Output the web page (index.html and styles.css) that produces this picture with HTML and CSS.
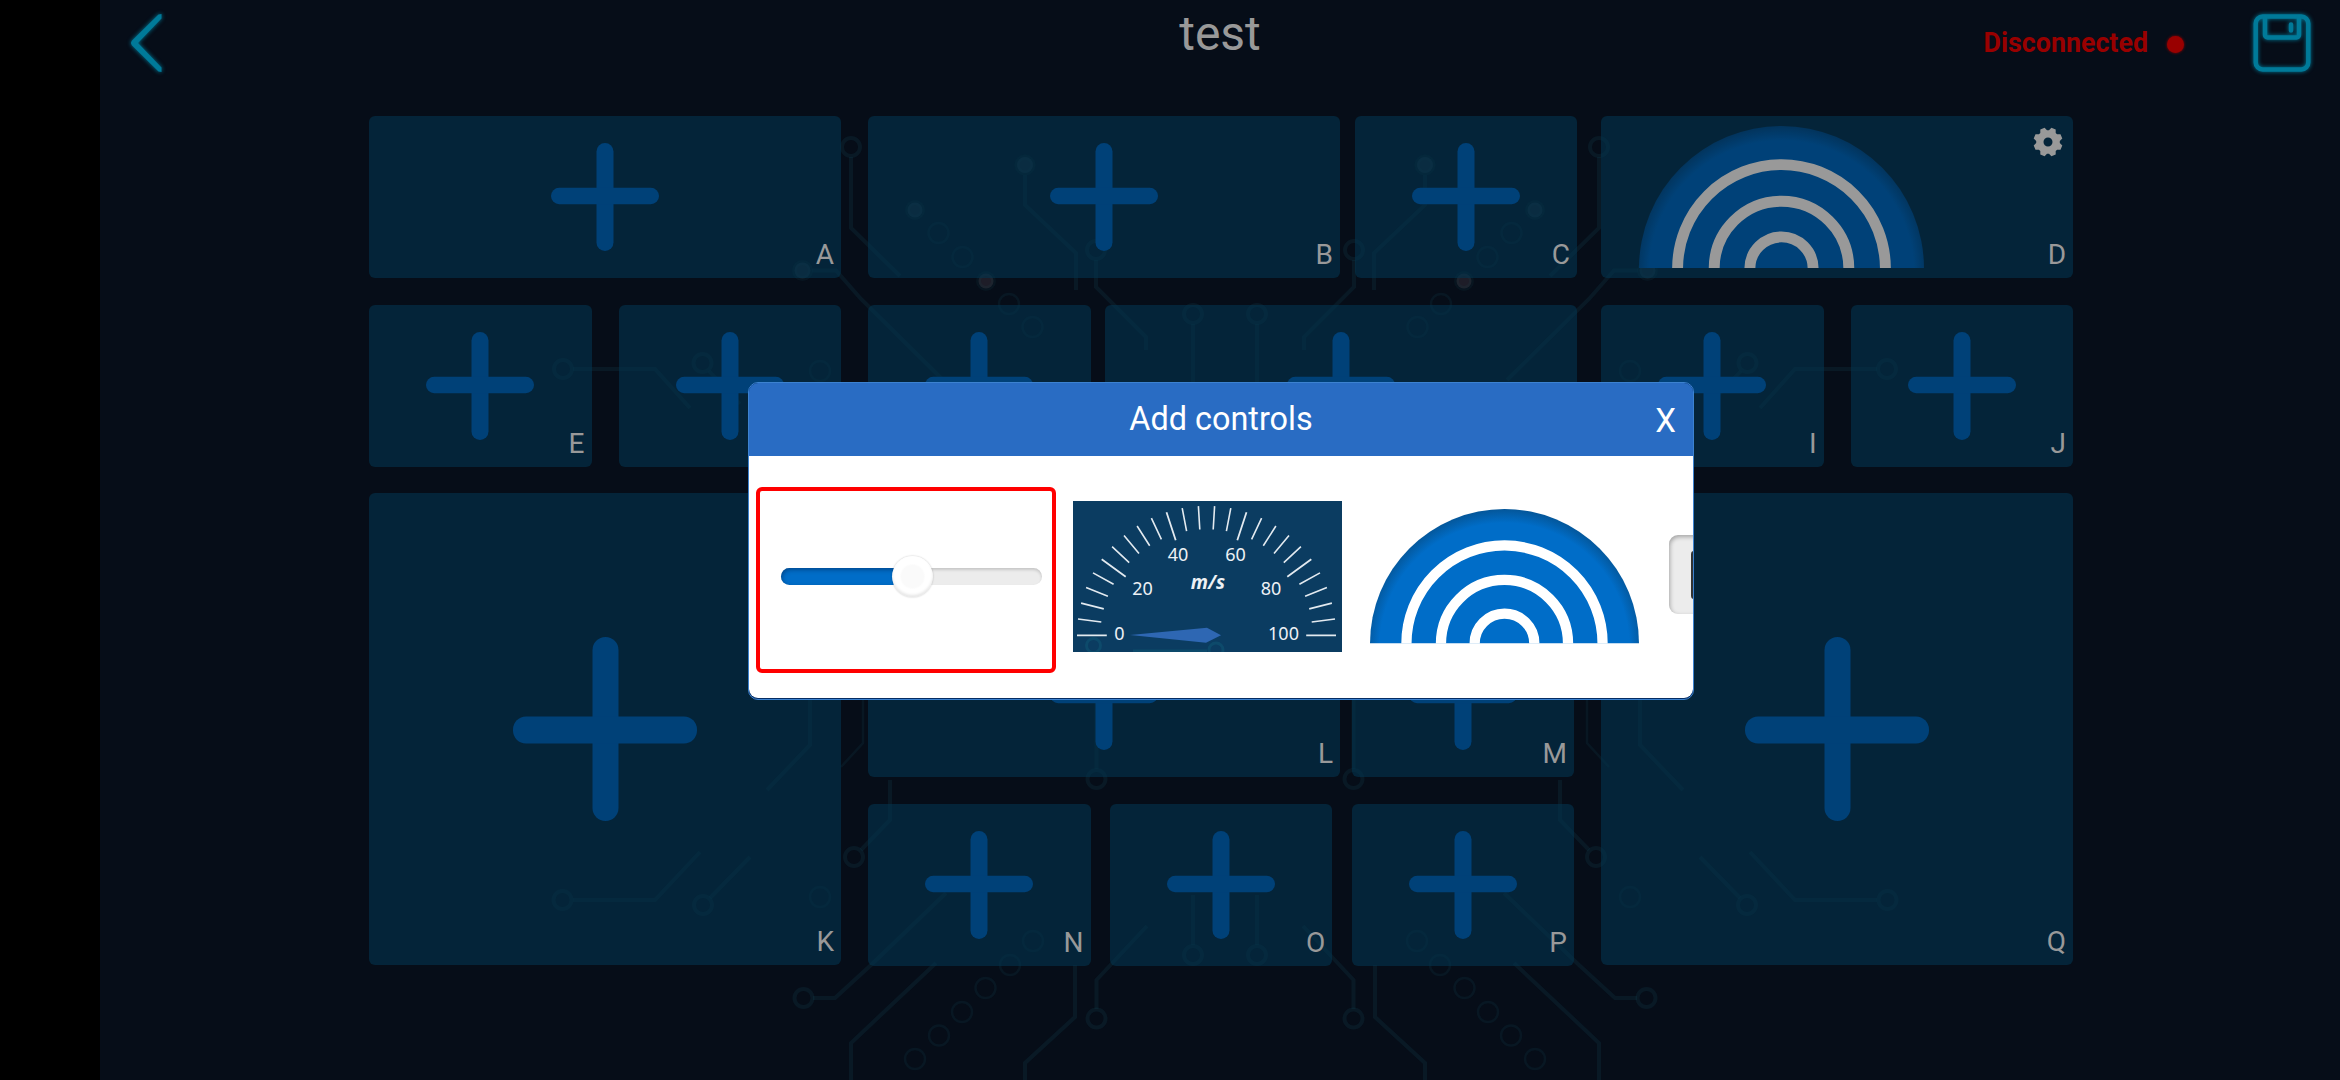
FILE: index.html
```html
<!DOCTYPE html>
<html lang="en">
<head>
<meta charset="utf-8">
<title>test</title>
<link rel="stylesheet" href="styles.css">
</head>
<body>
<svg class="defs" width="0" height="0" aria-hidden="true">
  <defs>
    <symbol id="plus" viewBox="0 0 108 108">
      <rect x="45.5" y="0" width="17" height="108" rx="8.5"/>
      <rect x="0" y="44.8" width="108" height="16.4" rx="8.2"/>
    </symbol>
    <symbol id="plus-big" viewBox="0 0 184 184">
      <rect x="79.5" y="0" width="26" height="184" rx="13"/>
      <rect x="0" y="79.5" width="184" height="27" rx="13"/>
    </symbol>
    <radialGradient id="dome" gradientUnits="userSpaceOnUse" cx="142.5" cy="147" r="147">
      <stop offset="0" stop-color="#006dc8"/>
      <stop offset=".9" stop-color="#006dc8"/>
      <stop offset="1" stop-color="#045699"/>
    </radialGradient>
    <symbol id="radar" viewBox="0 0 285 142.5">
      <path d="M0 142.5a142.5 142.5 0 0 1 285 0z" fill="url(#dome)"/>
      <g fill="none" stroke="#fff" stroke-width="10.9">
        <circle cx="142.5" cy="142.5" r="103.9"/>
        <circle cx="142.5" cy="142.5" r="67.3"/>
        <circle cx="142.5" cy="142.5" r="31.6"/>
      </g>
    </symbol>
    <g id="traces">
      <g class="trace">
        <path d="M851 157V228L900 276M812 270.5H836L861 299L943 380"/>
        <path d="M573 369H655L690 408M709 371L740 404"/>
        <path d="M1025 175V205L1076 253V290M1096 260V287L1146 337V350M1193 324V390"/>
        <path d="M573 900H655L700 852M710 898L750 857M810 700V745L767 790"/>
        <path d="M861 850L890 820V780M813 998H835L871 965L946 893"/>
        <path d="M851 1080V1043L936 963M1096.5 1009V980L1147 926M1075 965V1017L1025 1063V1080"/>
        <path d="M1096.5 769V700M1193 945V895"/>
        <circle cx="851" cy="147" r="9"/><circle cx="563" cy="369" r="9"/><circle cx="702.5" cy="363" r="9"/>
        <circle cx="1096" cy="250" r="9"/><circle cx="1193" cy="314" r="9"/>
        <circle cx="562.5" cy="900" r="9"/><circle cx="703" cy="905" r="9"/><circle cx="854" cy="857" r="9"/>
        <circle cx="803.5" cy="998" r="9"/><circle cx="1096.5" cy="1018.5" r="9"/>
        <circle cx="1096.5" cy="779" r="9"/><circle cx="1193" cy="955" r="9"/>
      </g>
      <g class="trace thin">
        <path d="M863 700V743L841 767"/>
        <circle cx="820" cy="371" r="10"/><circle cx="938.5" cy="233" r="10"/><circle cx="962.5" cy="257" r="10"/>
        <circle cx="1009" cy="304" r="10"/><circle cx="1032.5" cy="327" r="10"/><circle cx="820" cy="897" r="10"/>
        <circle cx="1033" cy="941" r="10"/><circle cx="1010" cy="965" r="10"/><circle cx="985.5" cy="988" r="10"/>
        <circle cx="962" cy="1012" r="10"/><circle cx="939" cy="1035.5" r="10"/><circle cx="915" cy="1059" r="10"/>
      </g>
      <g class="pad">
        <circle cx="802.5" cy="270.5" r="8"/><circle cx="1025" cy="165" r="8"/><circle cx="915" cy="210" r="7.5"/>
        <circle class="warm" cx="986" cy="281" r="7.5"/>
      </g>
    </g>
  </defs>
</svg>

<div class="app">
  <svg class="circuit" viewBox="100 0 2240 1080" aria-hidden="true">
    <use href="#traces"/>
    <use href="#traces" transform="translate(2450 0) scale(-1 1)"/>
  </svg>

  <header class="bar">
    <svg class="back" viewBox="0 0 46 74"><path d="M37.500 8V12.500L14 37 37.500 61.500V66L34.500 65.500 7.800 39.300Q6 37 7.800 34.700L34.500 8.500z"/></svg>
    <h1 class="title">test</h1>
    <div class="status">
      <span class="status-text">Disconnected</span>
      <span class="dot"></span>
      <svg class="save" viewBox="0 0 74 74">
        <rect x="10.7" y="10.5" width="52.6" height="53" rx="7"/>
        <path d="M20 11V29a2.500 2.500 0 0 0 2.500 2.500H51.500a2.500 2.500 0 0 0 2.500-2.500V11M46 18.500V24.500"/>
      </svg>
    </div>
  </header>

  <main class="board">
    <section class="side">
      <div class="row">
        <div class="tile wide"><svg class="plus"><use href="#plus"/></svg><span class="tag">A</span></div>
      </div>
      <div class="row">
        <div class="tile"><svg class="plus"><use href="#plus"/></svg><span class="tag">E</span></div>
        <div class="tile"><svg class="plus"><use href="#plus"/></svg><span class="tag">F</span></div>
      </div>
      <div class="tile huge"><svg class="plus-big"><use href="#plus-big"/></svg><span class="tag">K</span></div>
    </section>

    <section class="middle">
      <div class="row">
        <div class="tile wide"><svg class="plus"><use href="#plus"/></svg><span class="tag">B</span></div>
        <div class="tile"><svg class="plus"><use href="#plus"/></svg><span class="tag">C</span></div>
      </div>
      <div class="row">
        <div class="tile"><svg class="plus"><use href="#plus"/></svg><span class="tag">G</span></div>
        <div class="tile wide"><svg class="plus"><use href="#plus"/></svg><span class="tag">H</span></div>
      </div>
      <div class="row low">
        <div class="tile wide"><svg class="plus"><use href="#plus"/></svg><span class="tag">L</span></div>
        <div class="tile"><svg class="plus"><use href="#plus"/></svg><span class="tag">M</span></div>
      </div>
      <div class="row inset">
        <div class="tile"><svg class="plus"><use href="#plus"/></svg><span class="tag">N</span></div>
        <div class="tile"><svg class="plus"><use href="#plus"/></svg><span class="tag">O</span></div>
        <div class="tile"><svg class="plus"><use href="#plus"/></svg><span class="tag">P</span></div>
      </div>
    </section>

    <section class="side">
      <div class="row">
        <div class="tile wide filled">
          <svg class="radar"><use href="#radar"/></svg>
          <svg class="gear" viewBox="-15 -15 30 30">
            <path fill-rule="evenodd" d="M11.800-1V1L14.300 3.400 12.500 7.700 9.100 7.700 7.700 9.100V12.500L3.400 14.300 1 11.800H-1L-3.400 14.300-7.700 12.500V9.100L-9.100 7.700H-12.500L-14.300 3.400-11.800 1V-1L-14.300-3.400-12.500-7.700H-9.100L-7.700-9.100V-12.500L-3.400-14.300-1-11.800H1L3.400-14.300 7.700-12.500V-9.100L9.100-7.700H12.500L14.300-3.400zM0-4.500a4.500 4.500 0 1 0 0 9a4.500 4.500 0 1 0 0-9z"/>
          </svg>
          <span class="tag">D</span>
        </div>
      </div>
      <div class="row">
        <div class="tile"><svg class="plus"><use href="#plus"/></svg><span class="tag">I</span></div>
        <div class="tile"><svg class="plus"><use href="#plus"/></svg><span class="tag">J</span></div>
      </div>
      <div class="tile huge"><svg class="plus-big"><use href="#plus-big"/></svg><span class="tag">Q</span></div>
    </section>
  </main>
</div>

<div class="dialog" role="dialog" aria-label="Add controls">
  <div class="dialog-head">
    <h2 class="dialog-title">Add controls</h2>
    <span class="close">X</span>
  </div>
  <div class="picker">
    <div class="option selected">
      <div class="slider"><div class="slider-fill"></div><div class="thumb"></div></div>
    </div>
    <svg class="gauge" viewBox="0 0 269 151">
      <rect width="269" height="151" fill="#0b3c61"/>
      <g fill="none" stroke="#0d4a6b" stroke-width="3">
        <circle cx="20.500" cy="144.500" r="7"/><circle cx="143" cy="149" r="7"/><path d="M60 150H134"/>
      </g>
      <g class="ticks">
        <path d="M4 134.300H33.800M28.700 58.300L52.700 75.700M93.500 11.200L102.700 39.200M173.500 11.200L164.300 39.200M238.300 58.300L214.300 75.700M233.200 134.300H263"/>
        <path id="minor-ticks" class="minor" d="M5 118L28.300 121M8.100 102.100L30.800 107.900M13.100 86.600L34.900 95.300M20 71.900L40.600 83.200M39.100 45.700L56.200 61.700M51 34.500L66 52.600M64.100 25L76.700 44.800M78.400 17.100L88.400 38.300M109.200 7.100L113.600 30.200M125.400 5.100L126.800 28.500"/>
        <use href="#minor-ticks" transform="translate(267 0) scale(-1 1)"/>
      </g>
      <path d="M57 134L134 126.700 148 134.300 133 141.700z" fill="#2e67b3"/>
      <g class="gauge-text">
        <text x="46.300" y="138.500">0</text><text x="69.500" y="94">20</text><text x="105" y="60">40</text>
        <text x="162.500" y="60">60</text><text x="198" y="94">80</text><text x="210.500" y="138.500">100</text>
        <text class="unit" x="135" y="87.500">m/s</text>
      </g>
    </svg>
    <svg class="radar-option"><use href="#radar"/></svg>
    <div class="display"><div class="display-screen"></div></div>
  </div>
</div>
</body>
</html>
```
FILE: styles.css
```css
* { box-sizing: border-box; }
body {
  margin: 0;
  width: 2340px;
  height: 1080px;
  overflow: hidden;
  position: relative;
  background: #000;
  font-family: Roboto, "Liberation Sans", sans-serif;
}
svg { display: block; }
.defs { position: absolute; }
.app {
  position: relative;
  height: 1080px;
  margin-left: 100px;
  background: #060d18;
}
.circuit { position: absolute; inset: 0; width: 2240px; height: 1080px; }
.trace { fill: none; stroke: #1a6070; stroke-opacity: .15; stroke-width: 4; }
.thin { stroke-width: 2.500px; stroke-opacity: .12; }
.pad { fill: #5a7484; fill-opacity: .2; stroke: #1a6070; stroke-opacity: .1; stroke-width: 5; }
.warm { fill: #80606a; }

.bar {
  position: relative;
  display: grid;
  grid-template-columns: 1fr auto 1fr;
  height: 116px;
}
.back { width: 46px; height: 74px; margin: 6px 0 0 24px; fill: #007a99; }
.title { margin: 6px 0 0; font-size: 48px; line-height: 56px; font-weight: 400; color: #999; }
.status { display: flex; justify-content: flex-end; align-items: flex-start; }
.status-text { margin-top: 27px; font-size: 26.800px; line-height: 33px; font-weight: 700; color: #900; }
.dot {
  width: 17px; height: 17px; margin: 36px 61px 0 19px;
  border-radius: 50%; background: #990000; box-shadow: 0 0 3px #900;
}
.save { width: 74px; height: 74px; margin: 6px 21px 0 0; fill: none; stroke: #007a99; stroke-width: 4.500px; stroke-linecap: round; }
.back, .save { filter: drop-shadow(0 0 2px #007a99); }

.board { position: relative; display: flex; margin-left: 269px; }
.side { width: 472px; }
.middle { width: 709px; margin: 0 24px 0 27px; }
.row { display: flex; justify-content: space-between; height: 162px; margin-bottom: 26.700px; }
.low { margin-top: 148.700px; }
.low, .inset { width: 706px; }
.tile {
  position: relative;
  display: flex;
  align-items: center;
  justify-content: center;
  width: 222.500px;
  height: 100%;
  border-radius: 6px;
  background: rgba(4, 51, 78, .62);
}
.wide { width: 472px; }
.huge { width: 472px; height: 472px; }
.plus { width: 108px; height: 108px; fill: #004178; }
.plus-big { width: 184px; height: 184px; fill: #004178; }
.tag {
  position: absolute;
  right: 7px;
  bottom: 7px;
  font-size: 28px;
  line-height: 33px;
  color: #999;
}
.filled { justify-content: flex-start; padding-left: 38px; }
.radar { width: 285px; height: 142.500px; filter: brightness(.6); }
.gear { position: absolute; right: 10px; top: 11px; width: 30px; height: 30px; fill: #999; }

.dialog {
  position: absolute;
  left: 748px;
  top: 382px;
  width: 946px;
  height: 318px;
  overflow: hidden;
  border: 1px solid #3c82d0;
  border-radius: 10px;
  background: #052c62;
}
.dialog-head {
  display: grid;
  grid-template-columns: 1fr auto 1fr;
  height: 73px;
  background: #296cc3;
  color: #fff;
}
.dialog-title { grid-column: 2; margin: 16px 0 0; font-size: 32.400px; line-height: 40px; font-weight: 400; }
.close { justify-self: end; margin: 18px 17px 0 0; font-size: 33px; line-height: 40px; }
.picker {
  display: flex;
  align-items: flex-start;
  height: 242px;
  padding-left: 7px;
  border-radius: 0 0 9px 9px;
  background: #fff;
  overflow: hidden;
}
.option { flex: none; width: 300px; height: 186px; margin-top: 31px; border: 4px solid transparent; border-radius: 6px; }
.selected { border-color: #f00; }
.slider {
  position: relative;
  width: 261px;
  height: 17px;
  margin: 77px 0 0 21px;
  border-radius: 9px;
  background: #ececec;
  box-shadow: inset 0 2px 3px rgba(0, 0, 0, .16);
}
.slider-fill { width: 131px; height: 17px; border-radius: 9px 0 0 9px; background: #006dc8; box-shadow: inset 1px 2px 4px rgba(0, 40, 90, .5); }
.thumb {
  position: absolute;
  left: 111px;
  top: -12px;
  width: 41px;
  height: 41px;
  border-radius: 50%;
  background: radial-gradient(circle, #fafafa 0 11px, #fff 13px);
  box-shadow: 0 0 2px rgba(0, 0, 0, .25), inset 0 -2px 3px rgba(0, 0, 0, .1);
}
.gauge { flex: none; width: 269px; height: 151px; margin: 45px 0 0 17px; }
.ticks { fill: none; stroke: #e3eaf0; stroke-width: 1.800px; }
.minor { stroke-width: 1.600px; }
.gauge-text { font-family: "Noto Sans", "Open Sans", sans-serif; font-size: 18px; fill: #edf1f5; text-anchor: middle; }
.unit { font-size: 19px; font-weight: 700; font-style: italic; }
.radar-option { flex: none; width: 269px; height: 134.500px; margin: 53px 0 0 28px; }
.display {
  flex: none;
  width: 180px;
  height: 79px;
  margin: 79px 0 0 30px;
  padding: 16px 22px;
  border-radius: 9px;
  background: #ececec;
  box-shadow: inset 1px 2px 4px rgba(0, 0, 0, .3);
}
.display-screen { height: 48px; border-radius: 3px; background: #333; }
```
